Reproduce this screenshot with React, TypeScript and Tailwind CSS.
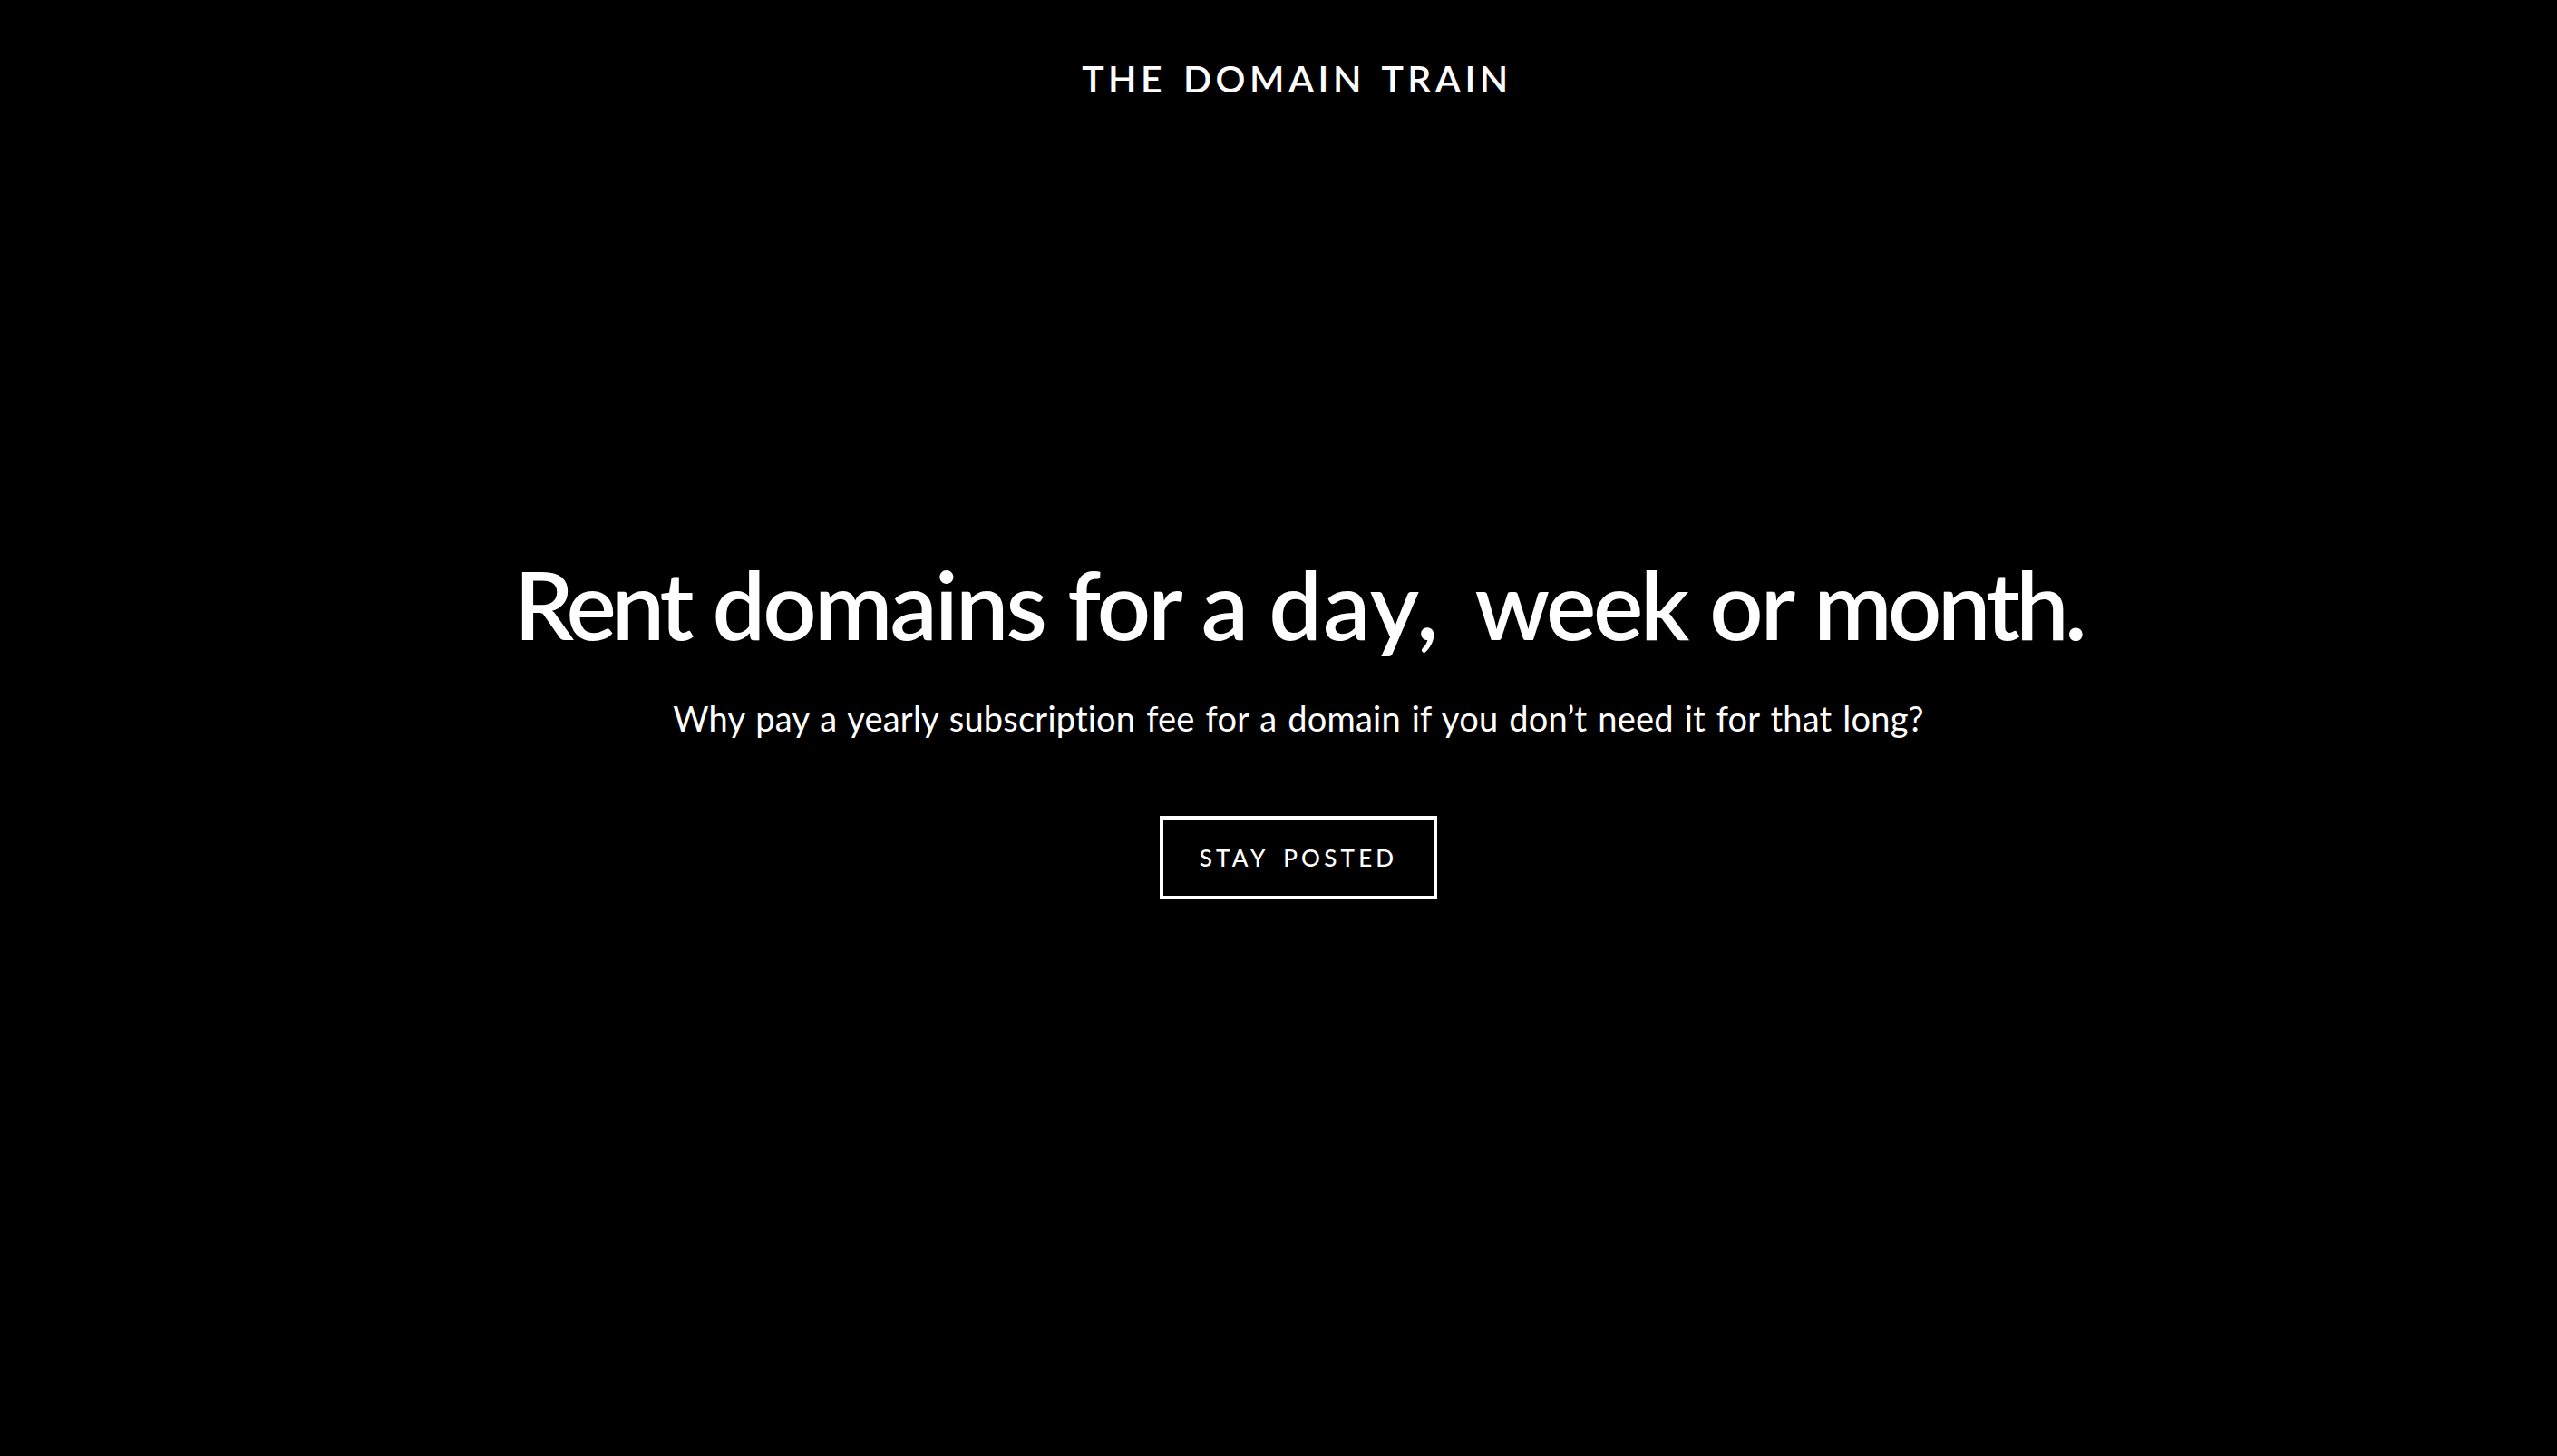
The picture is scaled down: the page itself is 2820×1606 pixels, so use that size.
export default function App() {
  return (
    <div className="flex min-h-screen flex-col items-center bg-black pl-11 font-['Lato',sans-serif] text-white antialiased">
      <header className="pt-[60px] pr-[3px]">
        <h1 className="text-[41px] leading-[54px] font-semibold tracking-[4.5px] [word-spacing:4px] uppercase whitespace-nowrap">
          The Domain Train
        </h1>
      </header>

      <main className="mt-[480px] flex flex-col items-center">
        <h2 className="text-[104px] leading-[144px] font-semibold tracking-[-2.8px] [word-spacing:2px] whitespace-nowrap">
          <span className="tracking-[-5px]">Rent</span> domains for a{' '}
          <span className="mr-[14px] tracking-[1px]">day,</span>{' '}
          <span className="tracking-[-3.2px]">week</span> or{' '}
          <span className="tracking-[-4.6px]">month.</span>
        </h2>
        <p className="mt-[28px] text-[38px] leading-[52px] tracking-[0.2px] [word-spacing:2px] whitespace-nowrap">
          Why pay a yearly subscription fee for a domain if you don’t need it for that long?
        </p>
        <a
          href="#"
          className="mt-[82px] flex h-[92px] w-[306px] items-center justify-center border-4 border-white text-[26px] font-medium tracking-[4.2px] [word-spacing:6px] uppercase whitespace-nowrap"
        >
          Stay Posted
        </a>
      </main>
    </div>
  );
}
